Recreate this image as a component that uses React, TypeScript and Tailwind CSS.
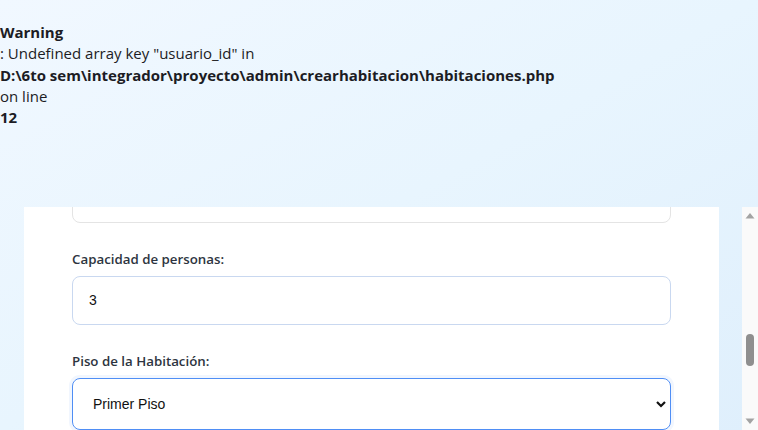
import React from "react";

function Scrollbar() {
  return (
    <div className="flex w-[16px] shrink-0 flex-col items-center bg-[#fafafa]">
      <svg width="16" height="17" viewBox="0 0 16 17" className="shrink-0">
        <path d="M3.5 11.5 L8 6 L12.5 11.5 Z" fill="#a3a3a3" />
      </svg>
      <div className="h-[110px] shrink-0" />
      <div className="h-[32px] w-[8px] shrink-0 rounded-full bg-[#8f8f8f]" />
      <div className="flex-1" />
      <svg width="16" height="17" viewBox="0 0 16 17" className="shrink-0">
        <path d="M3.5 5.5 L8 11 L12.5 5.5 Z" fill="#a3a3a3" />
      </svg>
    </div>
  );
}

export default function App() {
  return (
    <div className="h-[430px] w-[758px] overflow-hidden bg-gradient-to-br from-[#f1f8ff] via-[#e8f5fe] to-[#dfeffc] font-['Open_Sans','Noto_Sans',sans-serif] text-[#1c1c24]">
      <div className="pt-[22px] text-[15px] leading-[21.3px]">
        <div className="font-bold">Warning</div>
        <div>: Undefined array key "usuario_id" in</div>
        <div className="font-bold">D:\6to sem\integrador\proyecto\admin\crearhabitacion\habitaciones.php</div>
        <div>on line</div>
        <div className="font-bold">12</div>
      </div>
      <div className="mt-[79px] flex h-[223px]">
        <div className="flex-1 overflow-hidden pl-[24px]">
          <div className="flex h-full w-[695px] flex-col bg-white px-[48px]">
            <div className="-mt-[33px] h-[49px] shrink-0 rounded-[8px] border border-[#e4e4e4]" />
            <div className="mt-[26px] text-[13.3px] font-semibold leading-[20px] text-[#2d3440]">
              Capacidad de personas:
            </div>
            <div className="mt-[7px] flex h-[49px] shrink-0 items-center rounded-[8px] border border-[#c9d8f0] px-[16px] font-['Liberation_Sans',sans-serif] text-[14px] text-[#111]">
              3
            </div>
            <div className="mt-[26px] text-[13.3px] font-semibold leading-[20px] text-[#2d3440]">
              Piso de la Habitación:
            </div>
            <div className="mt-[7px] flex h-[52px] shrink-0 items-center justify-between rounded-[8px] border-[1.5px] border-[#4f8ef5] pl-[20px] pr-[3px] font-['Liberation_Sans',sans-serif] text-[14px] text-[#111] shadow-[0_0_0_3px_rgba(79,142,245,0.08)]">
              <span>Primer Piso</span>
              <svg width="12" height="10" viewBox="0 0 12 10">
                <path d="M2 3 L6 7 L10 3" fill="none" stroke="#111" strokeWidth="2.2" />
              </svg>
            </div>
          </div>
        </div>
        <div className="w-[7px] shrink-0" />
        <Scrollbar />
      </div>
    </div>
  );
}
